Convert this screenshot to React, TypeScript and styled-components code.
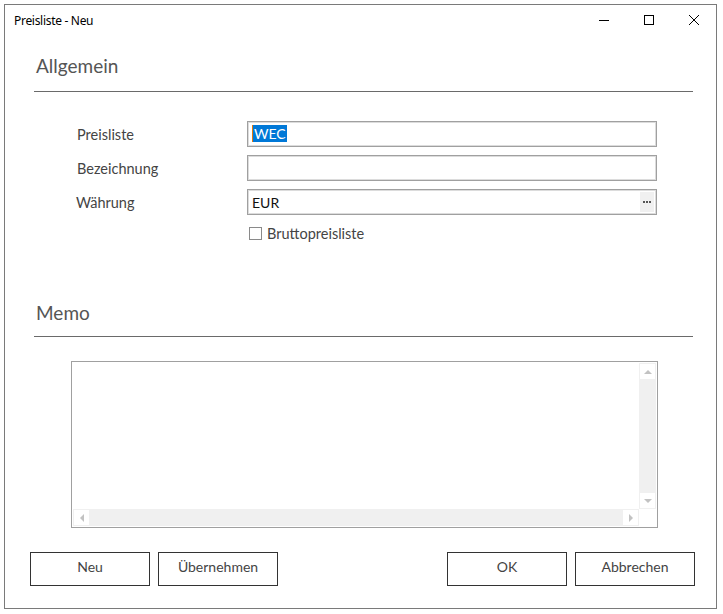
import React from 'react';
import styled, { createGlobalStyle } from 'styled-components';

const GlobalStyle = createGlobalStyle`
  body {
    margin: 0;
    background: #ffffff;
  }
`;

const Window = styled.div`
  margin: 4px;
  width: 711px;
  height: 603px;
  border: 1px solid #7a7a7a;
  background: #ffffff;
  display: flex;
  flex-direction: column;
  font-family: Lato, 'Open Sans', sans-serif;
`;

const TitleBar = styled.div`
  height: 30px;
  display: flex;
  align-items: center;
  padding-left: 9px;
`;

const TitleText = styled.div`
  flex: 1;
  font-family: 'Noto Sans', sans-serif;
  font-size: 12px;
  color: #000;
  letter-spacing: -0.3px;
`;

const Control = styled.div`
  width: 45px;
  height: 30px;
  display: flex;
  align-items: center;
  justify-content: center;
`;

const Content = styled.div`
  flex: 1;
  display: flex;
  flex-direction: column;
  padding: 0 23px 0 29px;
`;

const SectionTitle = styled.div<{ $top: number; $gap: number }>`
  margin-top: ${p => p.$top}px;
  padding-left: 2px;
  font-size: 19px;
  line-height: 24px;
  color: #555;
  padding-bottom: ${p => p.$gap}px;
  border-bottom: 1px solid #6a6a6a;
`;

const Form = styled.div`
  margin: 29px 0 0 43px;
  display: grid;
  grid-template-columns: 170px 410px;
  grid-auto-rows: 26px;
  row-gap: 8px;
  align-items: center;
`;

const Label = styled.div<{ $shift?: number }>`
  font-size: 14.5px;
  color: #444;
  margin-left: ${p => p.$shift ?? 0}px;
`;

const Field = styled.div`
  height: 26px;
  box-sizing: border-box;
  border: 1px solid #a0a0a0;
  box-shadow: inset 0 0 0 1px #dcdcdc;
  display: flex;
  align-items: center;
  padding: 0 2px 0 4px;
  font-size: 14px;
  color: #111;
`;

const Selected = styled.span`
  background: #0078d7;
  color: #fff;
  padding: 0 1px;
  line-height: 18px;
  border-left: 1px solid #e07a10;
`;

const FieldValue = styled.span`
  flex: 1;
`;

const EllipsisButton = styled.div`
  width: 14px;
  height: 20px;
  background: #f0f0f0;
  display: flex;
  align-items: center;
  justify-content: center;
`;

const CheckRow = styled.label`
  grid-column: 2;
  display: flex;
  align-items: center;
  gap: 5px;
  margin-top: -5px;
  padding-left: 2px;
  font-size: 14.5px;
  color: #444;
`;

const Box = styled.span`
  width: 11px;
  height: 11px;
  border: 1px solid #8a8a8a;
  background: #fff;
`;

const MemoBox = styled.div`
  margin: 24px 0 0 37px;
  width: 587px;
  height: 167px;
  box-sizing: border-box;
  border: 1px solid #a0a0a0;
  padding: 1px;
  display: grid;
  grid-template-columns: 1fr 17px;
  grid-template-rows: 1fr 17px;
`;

const Track = styled.div<{ $vertical?: boolean }>`
  background: #f0f0f0;
  display: flex;
  flex-direction: ${p => (p.$vertical ? 'column' : 'row')};
  justify-content: space-between;
`;

const Arrow = styled.div`
  width: 17px;
  height: 17px;
  box-sizing: border-box;
  background: #fff;
  border: 1px solid #f0f0f0;
  display: flex;
  align-items: center;
  justify-content: center;
`;

const Corner = styled.div`
  background: #fff;
`;

const ButtonBar = styled.div`
  margin-top: auto;
  margin-left: -4px;
  margin-bottom: 22px;
  display: flex;
  gap: 8px;
  width: 665px;
`;

const Button = styled.button<{ $pushRight?: boolean }>`
  width: 120px;
  height: 34px;
  border: 1px solid #333;
  background: #fff;
  font-family: Lato, 'Open Sans', sans-serif;
  font-size: 14px;
  color: #444;
  margin-left: ${p => (p.$pushRight ? 'auto' : '0')};
  padding: 0 0 5px;
`;

const Tri = ({ dir }: { dir: 'up' | 'down' | 'left' | 'right' }) => {
  const pts = {
    up: '0,4 4,0 8,4',
    down: '0,0 8,0 4,4',
    left: '4,0 4,8 0,4',
    right: '0,0 0,8 4,4',
  }[dir];
  const vertical = dir === 'up' || dir === 'down';
  return (
    <svg width={vertical ? 8 : 4} height={vertical ? 4 : 8} viewBox={vertical ? '0 0 8 4' : '0 0 4 8'}>
      <polygon points={pts} fill="#c2c2c2" />
    </svg>
  );
};

const App: React.FC = () => {
  return (
    <>
      <GlobalStyle />
      <Window>
        <TitleBar>
          <TitleText>Preisliste - Neu</TitleText>
          <Control>
            <svg width="10" height="10" viewBox="0 0 10 10">
              <line x1="0" y1="5.5" x2="10" y2="5.5" stroke="#000" strokeWidth="1" />
            </svg>
          </Control>
          <Control>
            <svg width="10" height="10" viewBox="0 0 10 10">
              <rect x="0.5" y="0.5" width="9" height="9" fill="none" stroke="#000" strokeWidth="1" />
            </svg>
          </Control>
          <Control>
            <svg width="10" height="10" viewBox="0 0 10 10">
              <path d="M0 0 L10 10 M10 0 L0 10" stroke="#000" strokeWidth="1" />
            </svg>
          </Control>
        </TitleBar>
        <Content>
          <SectionTitle $top={19} $gap={13}>Allgemein</SectionTitle>
          <Form>
            <Label>Preisliste</Label>
            <Field>
              <FieldValue>
                <Selected>WEC</Selected>
              </FieldValue>
            </Field>
            <Label>Bezeichnung</Label>
            <Field />
            <Label $shift={-1}>Währung</Label>
            <Field>
              <FieldValue>EUR</FieldValue>
              <EllipsisButton>
                <svg width="8" height="2" viewBox="0 0 8 2">
                  <rect x="0" y="0" width="2" height="2" fill="#555" />
                  <rect x="3" y="0" width="2" height="2" fill="#555" />
                  <rect x="6" y="0" width="2" height="2" fill="#555" />
                </svg>
              </EllipsisButton>
            </Field>
            <CheckRow>
              <Box />
              Bruttopreisliste
            </CheckRow>
          </Form>
          <SectionTitle $top={52} $gap={11}>Memo</SectionTitle>
          <MemoBox>
            <div />
            <Track $vertical>
              <Arrow><Tri dir="up" /></Arrow>
              <Arrow><Tri dir="down" /></Arrow>
            </Track>
            <Track>
              <Arrow><Tri dir="left" /></Arrow>
              <Arrow><Tri dir="right" /></Arrow>
            </Track>
            <Corner />
          </MemoBox>
          <ButtonBar>
            <Button>Neu</Button>
            <Button>Übernehmen</Button>
            <Button $pushRight>OK</Button>
            <Button>Abbrechen</Button>
          </ButtonBar>
        </Content>
      </Window>
    </>
  );
};

export default App;
